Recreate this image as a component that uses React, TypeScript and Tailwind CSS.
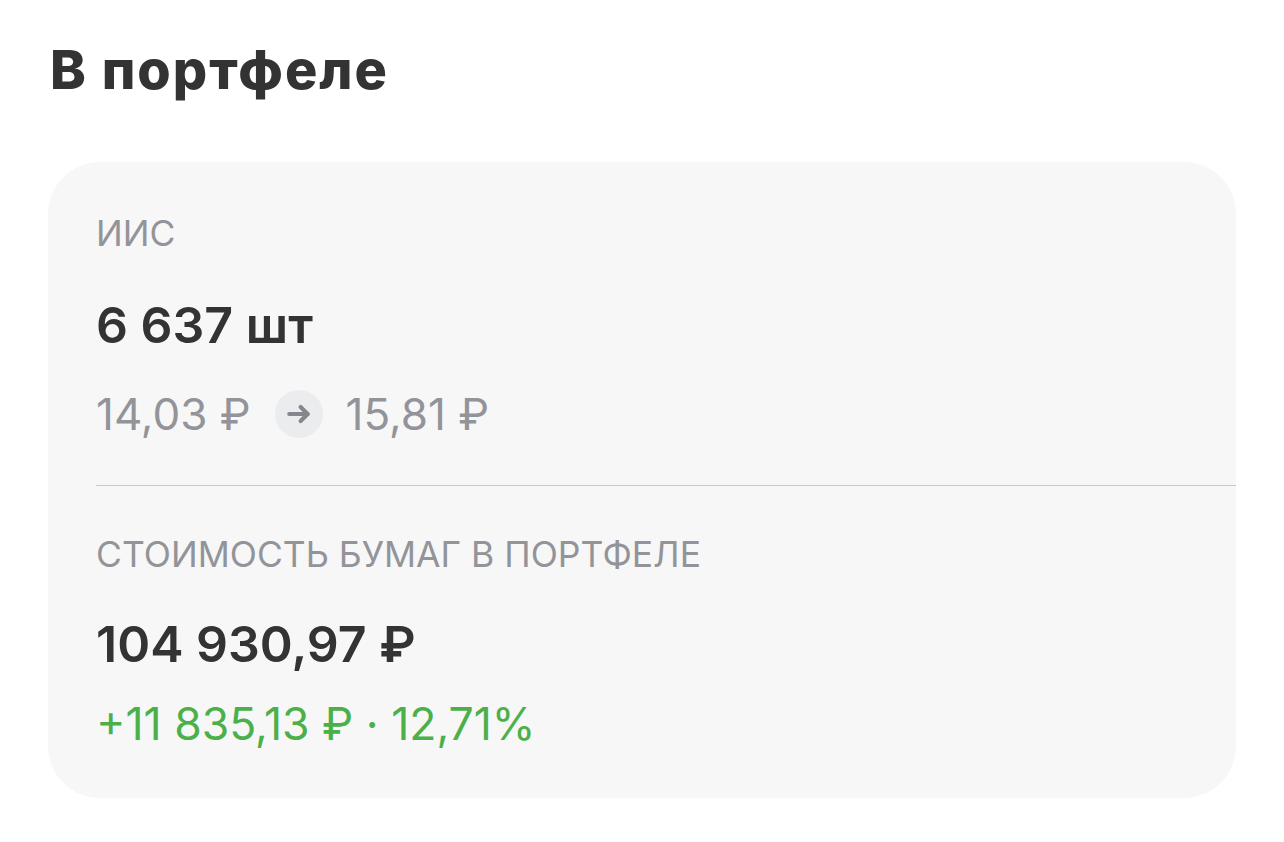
import React from "react";

export default function App() {
  return (
    <div
      className="min-h-[842px] w-[1284px] bg-white px-[48px] pt-[38px]"
      style={{ fontFamily: "Inter, 'Noto Sans', sans-serif" }}
    >
      <h1 className="ml-[2px] text-[54px] font-extrabold leading-[64px] tracking-[2px] text-[#333333]">В портфеле</h1>

      <div className="mt-[60px] rounded-[52px] bg-[#f7f7f8] pt-[50px] pb-[48px] pl-[48px]">
        <div className="text-[35.5px] leading-[44px] text-[#939499]">ИИС</div>
        <div className="mt-[39px] text-[50px] font-semibold leading-[60px] text-[#333333]">6 637 шт</div>
        <div className="mt-[33px] flex h-[52px] items-center">
          <span className="text-[44px] leading-[52px] text-[#939499]">14,03 ₽</span>
          <span className="ml-[24px] mr-[23px] flex h-[48px] w-[48px] items-center justify-center rounded-full bg-[#ebecee]">
            <svg width="26" height="26" viewBox="0 0 24 24" fill="none" stroke="#85878e" strokeWidth="3.8" strokeLinecap="round" strokeLinejoin="round">
              <path d="M3 12h17" />
              <path d="M13.5 5.5l6.5 6.5-6.5 6.5" />
            </svg>
          </span>
          <span className="text-[44px] leading-[52px] text-[#939499]">15,81 ₽</span>
        </div>
        <div className="mt-[45px] h-px bg-[#c8c8cc]" />
        <div className="mt-[47px] text-[35.5px] leading-[44px] text-[#939499]">СТОИМОСТЬ БУМАГ В ПОРТФЕЛЕ</div>
        <div className="mt-[37px] text-[50px] font-semibold leading-[60px] text-[#333333]">104 930,97 ₽</div>
        <div className="mt-[24px] text-[44.5px] leading-[52px] text-[#4cb04a]">+11 835,13 ₽ · 12,71%</div>
      </div>
    </div>
  );
}
